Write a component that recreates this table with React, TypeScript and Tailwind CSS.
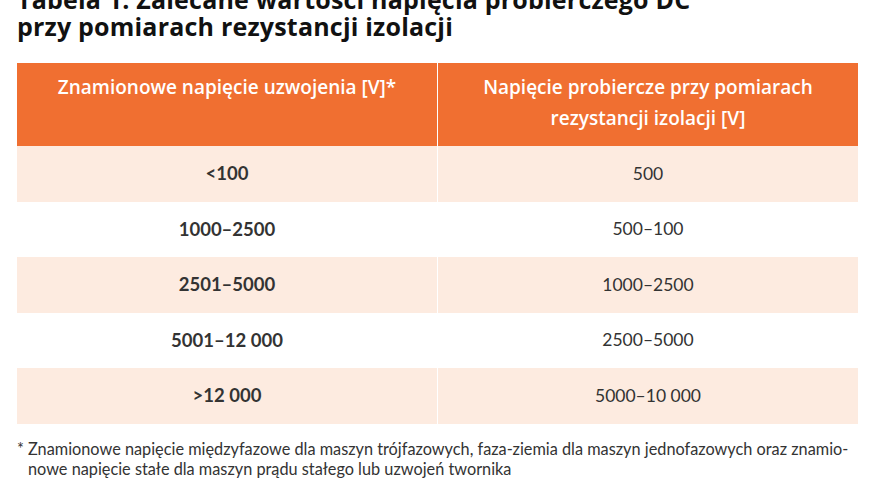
const ROWS = [
  { a: "<100", b: "500" },
  { a: "1000–2500", b: "500–100" },
  { a: "2501–5000", b: "1000–2500" },
  { a: "5001–12 000", b: "2500–5000" },
  { a: ">12 000", b: "5000–10 000" },
];

export default function App() {
  return (
    <div className="w-[880px] h-[480px] overflow-hidden bg-white">
      {/* Title (first line runs off the top edge) */}
      <h1 className="mt-[-14px] h-[54px] px-[17px] font-['Open_Sans',sans-serif] font-bold text-[25px] tracking-[0.2px] leading-[27px] text-[#111]">
        Tabela 1. Zalecane wartości napięcia probierczego DC
        <br />
        przy pomiarach rezystancji izolacji
      </h1>

      {/* Table */}
      <div className="mt-[23px] mx-[17px] w-[841px]">
        <div className="grid grid-cols-2 gap-x-[1px] bg-white h-[83px]">
          <div className="bg-[#f06f31] pt-[9px] text-center font-['Open_Sans',sans-serif] font-semibold text-[19px] leading-[31px] text-white">
            Znamionowe napięcie uzwojenia [V]*
          </div>
          <div className="bg-[#f06f31] pt-[9px] text-center font-['Open_Sans',sans-serif] font-semibold text-[19px] leading-[31px] text-white">
            Napięcie probiercze przy pomiarach
            <br />
            rezystancji izolacji [V]
          </div>
        </div>
        {ROWS.map((r, i) => (
          <div key={r.a} className="grid grid-cols-2 gap-x-[1px] bg-white h-[55.6px]">
            <div
              className={`${i % 2 === 0 ? "bg-[#fdebe0]" : "bg-white"} flex items-center justify-center font-['Lato',sans-serif] font-bold text-[18.5px] text-[#333]`}
            >
              {r.a}
            </div>
            <div
              className={`${i % 2 === 0 ? "bg-[#fdebe0]" : "bg-white"} flex items-center justify-center font-['Lato',sans-serif] text-[17.5px] text-[#333]`}
            >
              {r.b}
            </div>
          </div>
        ))}
      </div>

      {/* Footnote */}
      <div className="mt-[15px] pl-[17px] pr-[10px] flex font-['Lato',sans-serif] text-[16.3px] leading-[20px] text-[#333]">
        <span className="w-[11px] shrink-0">*</span>
        <p className="whitespace-nowrap">
          Znamionowe napięcie międzyfazowe dla maszyn trójfazowych, faza-ziemia dla maszyn jednofazowych oraz znamio-
          <br />
          nowe napięcie stałe dla maszyn prądu stałego lub uzwojeń twornika
        </p>
      </div>
    </div>
  );
}
